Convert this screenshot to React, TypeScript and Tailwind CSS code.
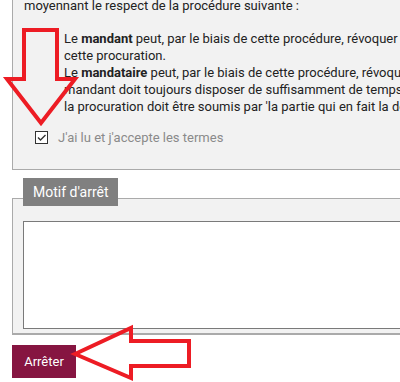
import React from 'react';

const Arrows: React.FC = () => (
  <svg className="pointer-events-none absolute left-0 top-0" width={400} height={382} viewBox="0 0 400 382">
    <polygon
      points="24,30 57,30 57,79 75,79 41,123 7,79 24,79"
      fill="none"
      stroke="#ed1c24"
      strokeWidth={4}
      strokeLinejoin="miter"
    />
    <polygon
      points="75,354 131,328 131,341 189,341 189,366 131,366 131,378"
      fill="none"
      stroke="#ed1c24"
      strokeWidth={4}
      strokeLinejoin="miter"
    />
  </svg>
);

export default function App() {
  return (
    <div className="relative h-[382px] w-[400px] overflow-hidden bg-white font-['Roboto','Liberation_Sans',sans-serif] text-[13px] leading-[17px] text-[#222]">
      <div className="-mt-[3px] ml-[12px] w-[520px] border-b border-l border-[#aaaaaa] bg-[#f2f2f2] pb-[23px] pl-[11px]">
        <div className="whitespace-nowrap">moyennant le respect de la procédure suivante :</div>
        <div className="mt-[16px] pl-[40px] whitespace-nowrap">
          <div>
            Le <b>mandant</b> peut, par le biais de cette procédure, révoquer
          </div>
          <div>cette procuration.</div>
          <div>
            Le <b>mandataire</b> peut, par le biais de cette procédure, révoquer cette procuration. Le
          </div>
          <div>mandant doit toujours disposer de suffisamment de temps pour agir.</div>
          <div>la procuration doit être soumis par 'la partie qui en fait la demande'.</div>
        </div>
        <label className="mt-[14px] flex items-center gap-[10px] pl-[11px]">
          <span className="flex h-[13px] w-[13px] items-center justify-center border border-[#333] bg-white">
            <svg width={11} height={11} viewBox="0 0 11 11">
              <path d="M2 5.5 L4.5 8 L9.5 3" fill="none" stroke="#333" strokeWidth={1.4} />
            </svg>
          </span>
          <span className="text-[#8a8a8a]">J'ai lu et j'accepte les termes</span>
        </label>
      </div>

      <div className="relative z-10 ml-[23px] mt-[8px] flex h-[28px] w-[95px] items-center bg-[#808080] pl-[10px] text-[14px] text-white">
        Motif d'arrêt
      </div>
      <div className="-mt-[8px] ml-[12px] w-[520px] border-b-2 border-l border-t border-[#aaaaaa] bg-[#f2f2f2] pb-[4px] pl-[10px] pt-[22px]">
        <textarea className="block h-[108px] w-[500px] resize-none border border-[#7a7a7a] bg-white outline-none" />
      </div>

      <button className="ml-[12px] mt-[10px] h-[33px] w-[64px] bg-[#861541] text-[13px] text-white">
        Arrêter
      </button>

      <Arrows />
    </div>
  );
}
